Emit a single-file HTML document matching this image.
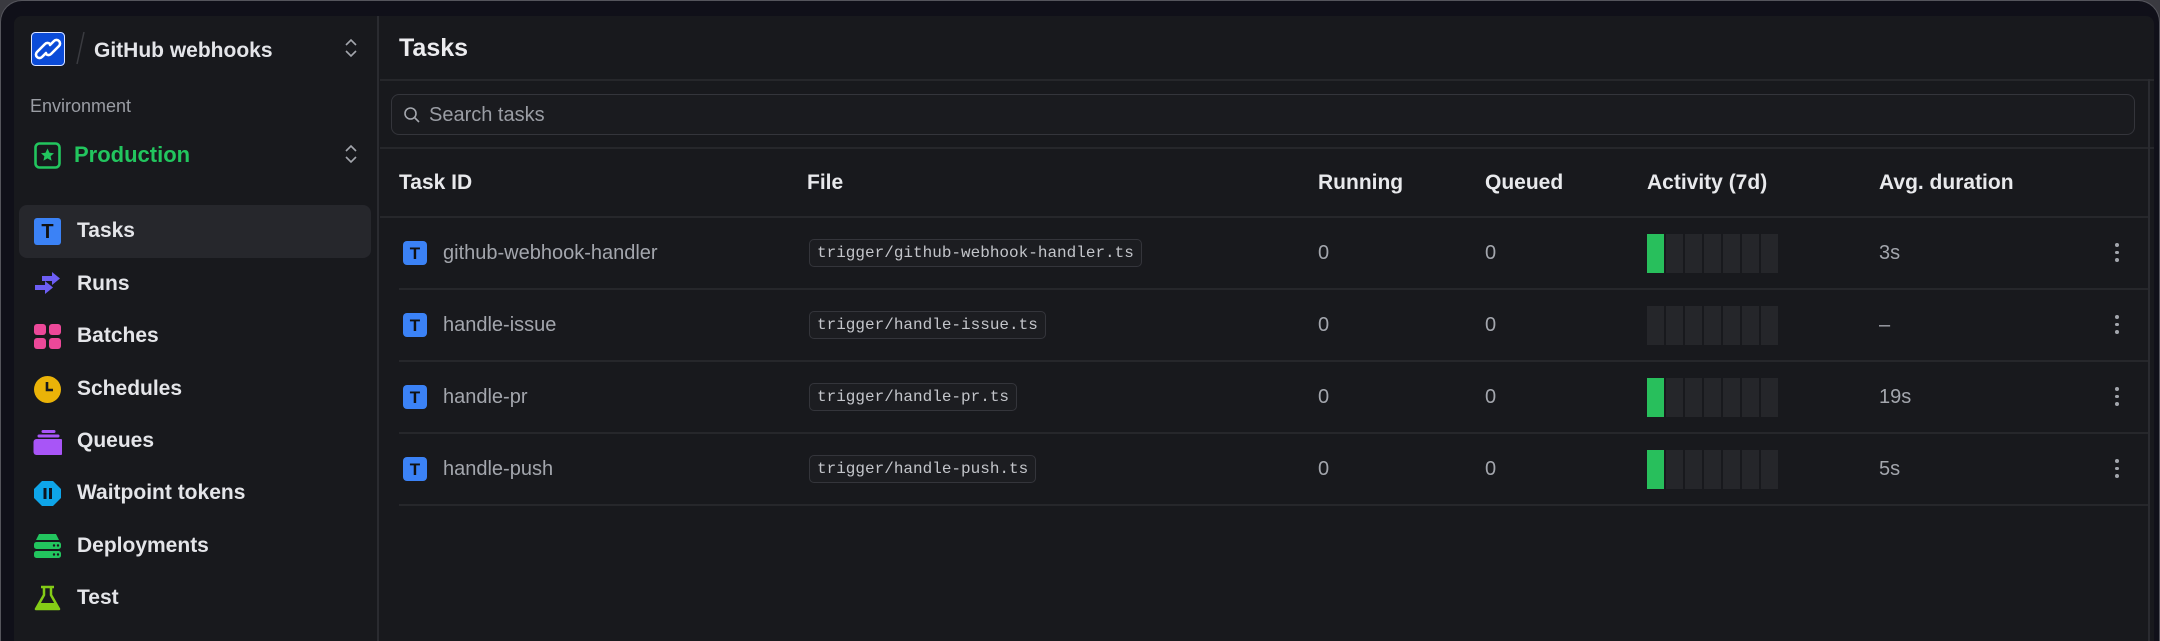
<!DOCTYPE html>
<html><head><meta charset="utf-8"><style>
*{box-sizing:border-box;margin:0;padding:0}
html,body{width:2160px;height:641px;overflow:hidden}
body{position:relative;background:#3a3a40;font-family:"Liberation Sans",sans-serif}
.frame{position:absolute;left:0;top:0;width:2160px;height:641px;background:#101019;border-radius:22px 22px 0 0;border:1px solid #55555c;border-bottom:none}
.panel{position:absolute;left:14px;top:16px;width:2140px;height:625px;background:#18191d;border-radius:8px 8px 0 0;overflow:hidden}
.side{position:absolute;left:0;top:0;width:365px;height:100%;border-right:2px solid #2a2b30;background:#18191d}
.main{position:absolute;left:366px;top:0;right:0;height:100%}
.t{position:absolute;white-space:nowrap}
.nav{position:absolute;left:20px;width:338px;height:52px}
.nav .ic{position:absolute;left:0;top:13px;width:27px;height:27px}
.nav span{position:absolute;left:43px;top:14px;font-size:21px;color:#e4e5e9;font-weight:bold}
.hl{position:absolute;left:5px;top:189px;width:352px;height:53px;background:#26272c;border-radius:8px}
.hdr{font-size:21px;color:#e8e9ec;font-weight:bold;top:155px}
.line{position:absolute;height:2px;background:#26272b}
.cell{font-size:20px;color:#a3a6ad}
.code{position:absolute;height:28px;border:1.5px solid #34353b;border-radius:5px;background:#1c1d21;font-family:"Liberation Mono",monospace;font-size:16px;color:#c3c5ca;padding:4px 7px;white-space:nowrap}
.bars{position:absolute;height:39px;display:flex;gap:2.5px}
.bars i{display:block;width:16.5px;height:100%;background:#25262a}
.bars i.g{background:#28bf5c}
.dots{position:absolute;width:4px}
.dots b{display:block;width:3.5px;height:3.5px;border-radius:2px;background:#a3a6ad;margin-bottom:4px}
.tic{position:absolute;width:24px;height:24px;background:#3b82f6;border-radius:4px;color:#111;font-weight:bold;font-size:17px;text-align:center;line-height:25px}
</style></head><body>
<div class="frame"></div>
<div class="panel">
 <div class="side">
  <svg style="position:absolute;left:17px;top:16px" width="34" height="34" viewBox="0 0 34 34"><rect width="34" height="34" rx="4" fill="#0b4bd8"/><rect x="0.5" y="0.5" width="33" height="33" rx="4" fill="none" stroke="#dfe6ff" stroke-width="1"/><g fill="none" stroke="#fff" stroke-width="2.6" stroke-linecap="round"><path d="M15 21 L11 25 a3.5 3.5 0 0 1 -5 -5 l8 -8 a3.5 3.5 0 0 1 5 0"/><path d="M19 13 L23 9 a3.5 3.5 0 0 1 5 5 l-8 8 a3.5 3.5 0 0 1 -5 0"/></g></svg>
  <svg style="position:absolute;left:60px;top:14px" width="12" height="36"><line x1="10" y1="2" x2="3" y2="34" stroke="#3a3b40" stroke-width="1.5"/></svg>
  <div class="t" style="left:80px;top:23px;font-size:21px;color:#e4e5e9;font-weight:bold">GitHub webhooks</div>
  <svg style="position:absolute;left:330px;top:21px" width="14" height="22" viewBox="0 0 14 22" fill="none" stroke="#a3a6ad" stroke-width="1.6"><path d="M2 8 L7 3 L12 8 M2 14 L7 19 L12 14"/></svg>
  <div class="t" style="left:16px;top:80px;font-size:18px;color:#9a9da4">Environment</div>
  <svg style="position:absolute;left:20px;top:126px" width="27" height="27" viewBox="0 0 27 27"><rect x="1.5" y="1.5" width="24" height="24" rx="4" fill="none" stroke="#22c55e" stroke-width="2.6"/><path d="M13.5 6.5l2 4.3 4.5.5-3.4 3 1 4.5-4.1-2.4-4.1 2.4 1-4.5-3.4-3 4.5-.5z" fill="#22c55e"/></svg>
  <div class="t" style="left:60px;top:126px;font-size:22px;color:#22c55e;font-weight:bold">Production</div>
  <svg style="position:absolute;left:330px;top:127px" width="14" height="22" viewBox="0 0 14 22" fill="none" stroke="#a3a6ad" stroke-width="1.6"><path d="M2 8 L7 3 L12 8 M2 14 L7 19 L12 14"/></svg>
  <div class="hl"></div>
  <div class="nav" style="top:189px"><div class="ic" style="background:#3b82f6;border-radius:3px;color:#111;font-weight:bold;font-size:20px;text-align:center;line-height:28px">T</div><span>Tasks</span></div>
  <div class="nav" style="top:242px"><svg class="ic" viewBox="0 0 27 27" fill="#6d5ef5"><path d="M8 5h10V1l8 6.5-8 6.5v-4H8z"/><path d="M1 14h10v-4l8 6.5-8 6.5v-4H1z"/></svg><span>Runs</span></div>
  <div class="nav" style="top:294px"><svg class="ic" viewBox="0 0 27 27" fill="#ec4899"><rect x="0" y="1" width="12" height="11" rx="3"/><rect x="15" y="1" width="12" height="11" rx="3"/><rect x="0" y="15" width="12" height="11" rx="3"/><rect x="15" y="15" width="12" height="11" rx="3"/></svg><span>Batches</span></div>
  <div class="nav" style="top:347px"><svg class="ic" viewBox="0 0 27 27"><circle cx="13.5" cy="13.5" r="13.5" fill="#eab308"/><path d="M13 6v8h6" fill="none" stroke="#18191d" stroke-width="2.6"/></svg><span>Schedules</span></div>
  <div class="nav" style="top:399px"><svg class="ic" viewBox="0 0 27 27" fill="#a855f7" style="width:30px;left:-2px"><rect x="0" y="11" width="30" height="16" rx="3"/><rect x="4" y="6.5" width="22" height="3" rx="1.5"/><rect x="8" y="2" width="14" height="3" rx="1.5"/></svg><span>Queues</span></div>
  <div class="nav" style="top:451px"><svg class="ic" viewBox="0 0 27 27" style="width:29px;left:-1px"><path d="M8 1h11l8 8v9l-8 8H8L0 18V9z" fill="#0ea5e9"/><rect x="9.5" y="8" width="3" height="11" fill="#0d1520"/><rect x="15" y="8" width="3" height="11" fill="#0d1520"/></svg><span>Waitpoint tokens</span></div>
  <div class="nav" style="top:504px"><svg class="ic" viewBox="0 0 27 27" fill="#22c55e"><path d="M5 1h17l3 6H2z"/><rect x="0" y="9" width="27" height="7" rx="2.5"/><rect x="0" y="18" width="27" height="7" rx="2.5"/><circle cx="20" cy="12.5" r="1.2" fill="#18191d"/><circle cx="24" cy="12.5" r="1.2" fill="#18191d"/><circle cx="20" cy="21.5" r="1.2" fill="#18191d"/><circle cx="24" cy="21.5" r="1.2" fill="#18191d"/></svg><span>Deployments</span></div>
  <div class="nav" style="top:556px"><svg class="ic" viewBox="0 0 27 27"><path d="M7 2h13M10 2v8L2 24h23L17 10V2" fill="none" stroke="#84cc16" stroke-width="2.5" stroke-linejoin="round"/><path d="M5 18h17l3 6H2z" fill="#84cc16"/></svg><span>Test</span></div>
 </div>
 <div class="main">
  <div class="t" style="left:19px;top:18px;font-size:25px;color:#ececef;font-weight:bold">Tasks</div>
  <div class="line" style="left:0;right:0;top:63px"></div>
  <div style="position:absolute;left:11px;top:78px;width:1744px;height:41px;border:1.5px solid #34353b;border-radius:8px;background:#1a1b1f"></div>
  <svg style="position:absolute;left:23px;top:90px" width="18" height="18" viewBox="0 0 18 18" fill="none" stroke="#a3a6ad" stroke-width="1.6"><circle cx="7.5" cy="7.5" r="5.5"/><path d="M11.5 11.5 L16 16"/></svg>
  <div class="t" style="left:49px;top:88px;font-size:20px;color:#9a9da4">Search tasks</div>
  <div class="line" style="left:0;right:0;top:131px"></div>
  <div class="t hdr" style="left:19px">Task ID</div>
  <div class="t hdr" style="left:427px">File</div>
  <div class="t hdr" style="left:938px">Running</div>
  <div class="t hdr" style="left:1105px">Queued</div>
  <div class="t hdr" style="left:1267px">Activity (7d)</div>
  <div class="t hdr" style="left:1499px">Avg. duration</div>
  <div class="line" style="left:0;width:1768px;top:200px"></div>
  <div class="line" style="left:19px;width:1749px;top:272px"></div>
  <div class="line" style="left:19px;width:1749px;top:344px"></div>
  <div class="line" style="left:19px;width:1749px;top:416px"></div>
  <div class="line" style="left:19px;width:1749px;top:488px"></div>
  <div style="position:absolute;left:1768px;top:63px;width:2px;bottom:0;background:#2a2b30"></div>

  <div class="tic" style="left:23px;top:225px">T</div>
  <div class="t cell" style="left:63px;top:226px">github-webhook-handler</div>
  <div class="code" style="left:429px;top:223px">trigger/github-webhook-handler.ts</div>
  <div class="t cell" style="left:938px;top:226px">0</div>
  <div class="t cell" style="left:1105px;top:226px">0</div>
  <div class="bars" style="left:1267px;top:218px"><i class="g"></i><i></i><i></i><i></i><i></i><i></i><i></i></div>
  <div class="t cell" style="left:1499px;top:226px">3s</div>
  <div class="dots" style="left:1735px;top:227px"><b></b><b></b><b></b></div>

  <div class="tic" style="left:23px;top:297px">T</div>
  <div class="t cell" style="left:63px;top:298px">handle-issue</div>
  <div class="code" style="left:429px;top:295px">trigger/handle-issue.ts</div>
  <div class="t cell" style="left:938px;top:298px">0</div>
  <div class="t cell" style="left:1105px;top:298px">0</div>
  <div class="bars" style="left:1267px;top:290px"><i></i><i></i><i></i><i></i><i></i><i></i><i></i></div>
  <div class="t cell" style="left:1499px;top:298px">–</div>
  <div class="dots" style="left:1735px;top:299px"><b></b><b></b><b></b></div>

  <div class="tic" style="left:23px;top:369px">T</div>
  <div class="t cell" style="left:63px;top:370px">handle-pr</div>
  <div class="code" style="left:429px;top:367px">trigger/handle-pr.ts</div>
  <div class="t cell" style="left:938px;top:370px">0</div>
  <div class="t cell" style="left:1105px;top:370px">0</div>
  <div class="bars" style="left:1267px;top:362px"><i class="g"></i><i></i><i></i><i></i><i></i><i></i><i></i></div>
  <div class="t cell" style="left:1499px;top:370px">19s</div>
  <div class="dots" style="left:1735px;top:371px"><b></b><b></b><b></b></div>

  <div class="tic" style="left:23px;top:441px">T</div>
  <div class="t cell" style="left:63px;top:442px">handle-push</div>
  <div class="code" style="left:429px;top:439px">trigger/handle-push.ts</div>
  <div class="t cell" style="left:938px;top:442px">0</div>
  <div class="t cell" style="left:1105px;top:442px">0</div>
  <div class="bars" style="left:1267px;top:434px"><i class="g"></i><i></i><i></i><i></i><i></i><i></i><i></i></div>
  <div class="t cell" style="left:1499px;top:442px">5s</div>
  <div class="dots" style="left:1735px;top:443px"><b></b><b></b><b></b></div>
 </div>
</div>
</body></html>
